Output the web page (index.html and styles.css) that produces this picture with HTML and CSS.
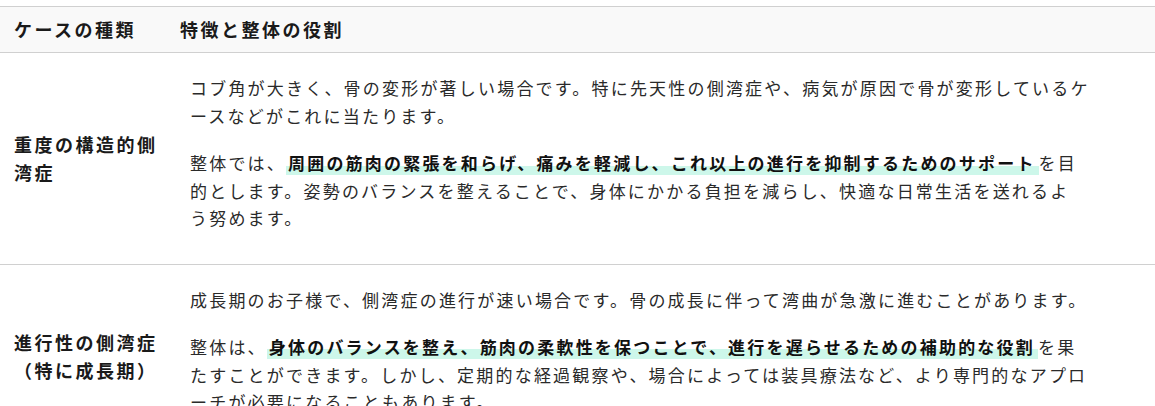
FILE: index.html
```html
<!DOCTYPE html>
<html lang="ja">
<head>
    <meta charset="UTF-8">
    <meta name="viewport" content="width=device-width, initial-scale=1.0">
    <title>側湾症のケースと整体の役割</title>
    <link rel="stylesheet" href="styles.css">
</head>
<body>
    <table class="case-table">
        <thead>
            <tr>
                <th class="case-name">ケースの種類</th>
                <th>特徴と整体の役割</th>
            </tr>
        </thead>
        <tbody>
            <tr>
                <td class="case-name">重度の構造的側湾症</td>
                <td class="case-desc">
                    <p>コブ角が大きく、骨の変形が著しい場合です。特に先天性の側湾症や、病気が原因で骨が変形しているケ<br>ースなどがこれに当たります。</p>
                    <p>整体では、<strong class="marker">周囲の筋肉の緊張を和らげ、痛みを軽減し、これ以上の進行を抑制するためのサポート</strong>を目<br>的とします。姿勢のバランスを整えることで、身体にかかる負担を減らし、快適な日常生活を送れるよ<br>う努めます。</p>
                </td>
            </tr>
            <tr>
                <td class="case-name">進行性の側湾症（特に成長期）</td>
                <td class="case-desc">
                    <p>成長期のお子様で、側湾症の進行が速い場合です。骨の成長に伴って湾曲が急激に進むことがあります。</p>
                    <p>整体は、<strong class="marker">身体のバランスを整え、筋肉の柔軟性を保つことで、進行を遅らせるための補助的な役割</strong>を果<br>たすことができます。しかし、定期的な経過観察や、場合によっては装具療法など、より専門的なアプロ<br>ーチが必要になることもあります。</p>
                </td>
            </tr>
        </tbody>
    </table>
</body>
</html>
```

FILE: styles.css
```css
body { margin: 0; padding: 6px 0 0; font-family: "Noto Sans CJK JP", "Noto Sans", sans-serif; color: #2a2a2a; background: #fff; }
.case-table { width: 100%; border-collapse: collapse; border-top: 1px solid #d0d0d0; }
.case-table th { background: #f9f9f9; text-align: left; font-size: 18px; font-weight: bold; letter-spacing: 2.5px; color: #1a1a1a; padding: 10px 14px; line-height: 25px; border-bottom: 1px solid #d0d0d0; }
.case-table td { border-bottom: 1px solid #d0d0d0; vertical-align: middle; padding: 11px 14px 12px; }
.case-table .case-name { width: 150px; padding-right: 2px; }
td.case-name { font-size: 18px; font-weight: bold; letter-spacing: 2.5px; line-height: 28px; color: #1a1a1a; }
.case-table .case-desc { font-size: 17px; letter-spacing: 2.2px; line-height: 27.5px; padding-left: 24px; }
.case-desc p { max-width: 930px; margin: 10px 0 20px; }
.marker { background: linear-gradient(transparent 62%, #cdf7ea 62%); font-weight: bold; color: #111; padding: 0 3px 0 2px; }
```
